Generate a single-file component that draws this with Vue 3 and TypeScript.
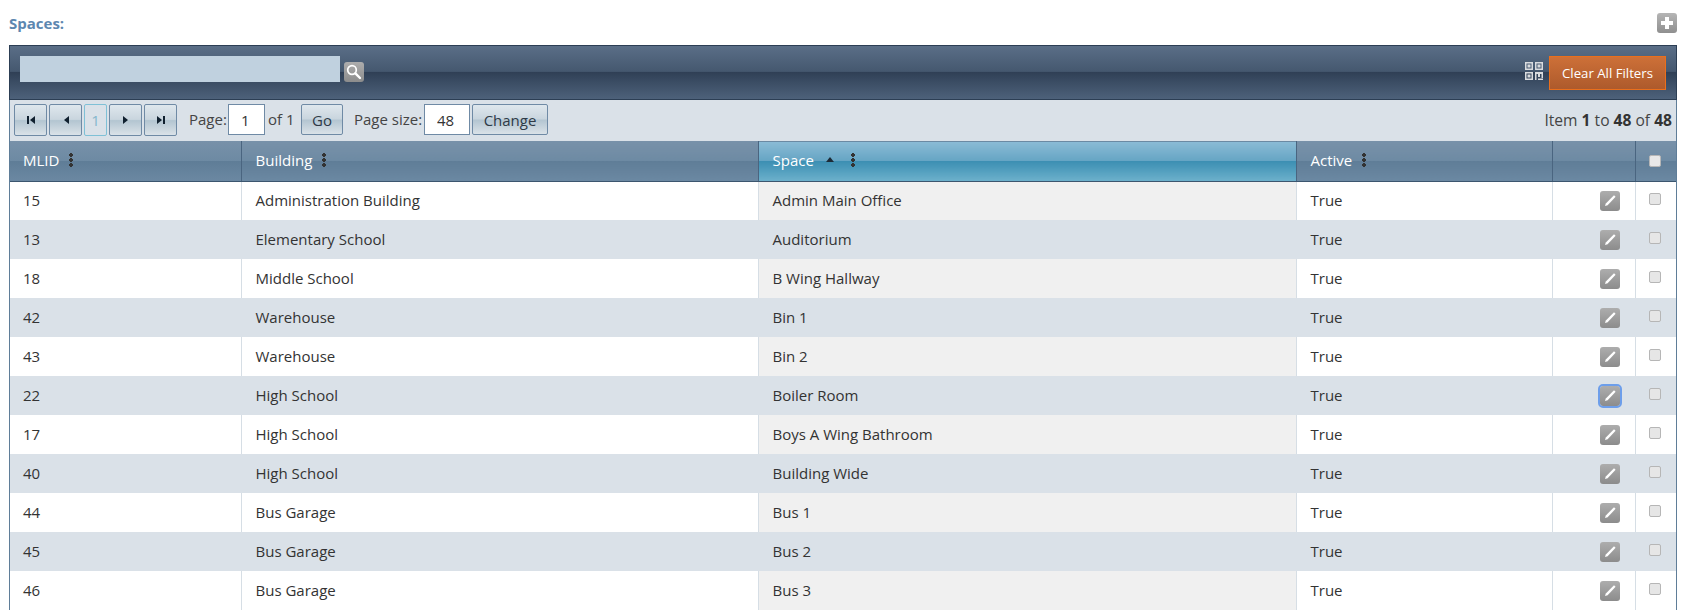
<script setup lang="ts">
interface Row { id: number; building: string; space: string; active: string; focus?: boolean }
const rows: Row[] = [
  { id: 15, building: 'Administration Building', space: 'Admin Main Office', active: 'True' },
  { id: 13, building: 'Elementary School', space: 'Auditorium', active: 'True' },
  { id: 18, building: 'Middle School', space: 'B Wing Hallway', active: 'True' },
  { id: 42, building: 'Warehouse', space: 'Bin 1', active: 'True' },
  { id: 43, building: 'Warehouse', space: 'Bin 2', active: 'True' },
  { id: 22, building: 'High School', space: 'Boiler Room', active: 'True', focus: true },
  { id: 17, building: 'High School', space: 'Boys A Wing Bathroom', active: 'True' },
  { id: 40, building: 'High School', space: 'Building Wide', active: 'True' },
  { id: 44, building: 'Bus Garage', space: 'Bus 1', active: 'True' },
  { id: 45, building: 'Bus Garage', space: 'Bus 2', active: 'True' },
  { id: 46, building: 'Bus Garage', space: 'Bus 3', active: 'True' }
]
</script>

<template>
  <div class="page">
    <div class="title-row">
      <span class="title">Spaces:</span>
      <button class="icon-btn plus" aria-label="Add">
        <svg width="14" height="14" viewBox="0 0 14 14"><path d="M5 1h4v4h4v4H9v4H5V9H1V5h4z" fill="#fff" /></svg>
      </button>
    </div>
    <div class="grid">
      <div class="toolbar">
        <input class="search" />
        <button class="icon-btn search-btn" aria-label="Search">
          <svg width="16" height="16" viewBox="0 0 16 16"><circle cx="6" cy="6" r="4.3" fill="none" stroke="#fff" stroke-width="1.7" /><path d="M9.4 9.4L14 14" stroke="#fff" stroke-width="2.4" stroke-linecap="round" /></svg>
        </button>
        <svg class="qr" width="18" height="18" viewBox="0 0 18 18">
          <path fill="#d9dcdf" fill-rule="evenodd" d="M0 0h8v8H0zM1.500 1.500v5h5v-5zM2.500 2.500h3v3h-3zM10 0h8v8h-8zM11.500 1.500v5h5v-5zM12.500 2.500h3v3h-3zM0 10h8v8H0zM1.500 11.500v5h5v-5zM2.500 12.500h3v3h-3zM10 10h8v6h-1.500v-4h-1.500V15H13v-3h-1.500V18H10zM13 16.500h5V18h-5z" />
        </svg>
        <button class="clear">Clear All Filters</button>
      </div>
      <div class="pager">
        <button class="nav">
          <svg width="10" height="10" viewBox="0 0 10 10"><path d="M1 1h2v8H1zM9 1v8L4 5z" fill="#10202f" /></svg>
        </button>
        <button class="nav">
          <svg width="10" height="10" viewBox="0 0 10 10"><path d="M8 1v8L3 5z" fill="#10202f" /></svg>
        </button>
        <span class="current">1</span>
        <button class="nav">
          <svg width="10" height="10" viewBox="0 0 10 10"><path d="M2 1v8l5-4z" fill="#10202f" /></svg>
        </button>
        <button class="nav">
          <svg width="10" height="10" viewBox="0 0 10 10"><path d="M7 1h2v8H7zM1 1v8l5-4z" fill="#10202f" /></svg>
        </button>
        <span class="lbl page-lbl">Page:</span>
        <input class="num page-num" value="1" />
        <span class="lbl of">of 1</span>
        <button class="txt go">Go</button>
        <span class="lbl size-lbl">Page size:</span>
        <input class="num size-num" value="48" />
        <button class="txt change">Change</button>
        <span class="info">Item <b>1</b> to <b>48</b> of <b>48</b></span>
      </div>
      <table>
        <colgroup>
          <col class="c1" /><col class="c2" /><col class="c3" /><col class="c4" /><col class="c5" /><col class="c6" />
        </colgroup>
        <thead>
          <tr>
            <th><span class="th-in">MLID <i class="dots"></i></span></th>
            <th><span class="th-in">Building <i class="dots"></i></span></th>
            <th class="sorted"><span class="th-in">Space <i class="arrow"></i> <i class="dots"></i></span></th>
            <th><span class="th-in">Active <i class="dots"></i></span></th>
            <th></th>
            <th class="chk-h"><span class="box head-box"></span></th>
          </tr>
        </thead>
        <tbody>
          <tr v-for="r in rows" :key="r.id">
            <td>{{ r.id }}</td>
            <td>{{ r.building }}</td>
            <td class="sort-cell">{{ r.space }}</td>
            <td>{{ r.active }}</td>
            <td class="edit-cell">
              <button class="icon-btn edit" :class="{ focus: r.focus }" aria-label="Edit">
                <svg width="14" height="14" viewBox="0 0 14 14"><path d="M11 1.200l1.600 1.600L4.600 11.200 2 12l.8-2.600z" fill="#fff" /></svg>
              </button>
            </td>
            <td class="chk"><span class="box"></span></td>
          </tr>
        </tbody>
      </table>
    </div>
  </div>
</template>

<style scoped>
.page {
  padding: 13px 13px 0 9px;
  font-family: "Open Sans", "Noto Sans", sans-serif;
  font-size: 15px;
  color: #333;
}
.title-row {
  display: flex;
  justify-content: space-between;
  align-items: center;
  height: 20px;
  margin-bottom: 12px;
}
.title {
  color: #5d87b0;
  font-weight: 700;
  font-size: 15px;
}
.icon-btn {
  border: 0;
  padding: 0;
  border-radius: 3px;
  background: linear-gradient(#adadad, #8c8c8c);
  display: flex;
  align-items: center;
  justify-content: center;
}
.plus {
  width: 20px;
  height: 20px;
  background: linear-gradient(#b5b5b5, #8f8f8f);
}
.grid {
  border-left: 1px solid #5f7d98;
  border-right: 1px solid #5f7d98;
}
.toolbar {
  display: flex;
  align-items: flex-start;
  height: 55px;
  box-sizing: border-box;
  padding: 10px 10px 0 10px;
  border: 1px solid #2c3e54;
  margin: 0 -1px;
  background: linear-gradient(#5a6e87 0%, #45586f 48%, #2f3f55 49%, #3c4e65 70%, #4d617a 100%);
}
.search {
  width: 320px;
  height: 26px;
  box-sizing: border-box;
  border: 0;
  background: #c0d1df;
}
.search-btn {
  width: 20px;
  height: 20px;
  margin: 6px 0 0 4px;
}
.qr {
  margin: 6px 6px 0 auto;
}
.clear {
  width: 117px;
  height: 34px;
  box-sizing: border-box;
  border: 1px solid #ea6f1c;
  background: linear-gradient(#cd7038, #ad5a2c);
  color: #fff;
  font: inherit;
  font-size: 13.2px;
}
.pager {
  display: flex;
  align-items: flex-start;
  height: 41px;
  box-sizing: border-box;
  padding-top: 4px;
  padding-left: 4px;
  background: #dae1e8;
}
.nav,
.txt {
  box-sizing: border-box;
  padding: 0;
  border: 1px solid #6f8aa5;
  border-radius: 2px;
  background: linear-gradient(#dfe7ed 0%, #c9d5de 48%, #b3c5d1 52%, #dae2e8 100%);
  color: #2e3a47;
  font: inherit;
}
.nav {
  width: 33px;
  height: 32px;
  margin-right: 2px;
  display: flex;
  align-items: center;
  justify-content: center;
}
.current {
  width: 23px;
  height: 32px;
  box-sizing: border-box;
  margin-right: 2px;
  border: 1px solid #7fc0d6;
  border-radius: 2px;
  color: #84b6cc;
  text-align: center;
  line-height: 30px;
}
.lbl {
  line-height: 31px;
  color: #444;
}
.page-lbl {
  margin-left: 10px;
  width: 39px;
  white-space: nowrap;
}
.num {
  height: 31px;
  box-sizing: border-box;
  border: 1px solid #6f8aa5;
  background: #fff;
  font: inherit;
  color: #333;
  padding: 0 0 0 12px;
}
.page-num {
  width: 37px;
}
.of {
  margin-left: 3px;
  width: 33px;
  white-space: nowrap;
}
.txt {
  height: 31px;
}
.go {
  width: 42px;
}
.size-lbl {
  margin-left: 11px;
  width: 70px;
  white-space: nowrap;
}
.size-num {
  width: 46px;
}
.change {
  width: 76px;
  margin-left: 2px;
}
.info {
  margin-left: auto;
  margin-right: 4px;
  line-height: 32px;
  color: #444;
  font-size: 15.6px;
}
.info b {
  color: #333;
}
table {
  width: 100%;
  table-layout: fixed;
  border-collapse: collapse;
}
.c1 { width: 231px; }
.c2 { width: 517px; }
.c3 { width: 538px; }
.c4 { width: 256px; }
.c5 { width: 83px; }
th {
  height: 40px;
  padding: 0 0 2px 14px;
  box-sizing: border-box;
  text-align: left;
  font-weight: 400;
  color: #fff;
  border-left: 1px solid #4a6580;
  border-bottom: 1px solid #3c566f;
  background: linear-gradient(#7891a9 0%, #6d8aa3 50%, #5f7d97 51%, #6b88a2 100%);
}
th:first-child {
  border-left: 0;
  padding-left: 13px;
}
th.sorted {
  background: linear-gradient(#8cbcd6 0%, #66a5c4 49%, #3b8eb2 50%, #6cb0cb 100%);
  box-shadow: inset 0 1px 0 #6b8aa3;
}
.th-in {
  display: inline-flex;
  align-items: center;
  gap: 6px;
}
.dots {
  width: 4px;
  height: 14px;
  margin-left: 4px;
  background: radial-gradient(circle at 2px 2px, #333 1.8px, transparent 2px) 0 0 / 4px 5px repeat-y;
}
.arrow {
  width: 0;
  height: 0;
  margin: 0 6px 0 6px;
  border-left: 4px solid transparent;
  border-right: 4px solid transparent;
  border-bottom: 5px solid #1d2a36;
}
.arrow + .dots {
  margin-left: 5px;
}
td {
  height: 39px;
  padding: 0 0 2px 14px;
  box-sizing: border-box;
  border-left: 1px solid #d6dee5;
}
td:first-child {
  border-left: 0;
  padding-left: 13px;
}
tbody tr:nth-child(even) td {
  background: #dae1e8;
  border-left-color: #dae1e8;
}
.sort-cell {
  background: #f0f0f0;
}
td.edit-cell {
  padding: 0 0 0 47px;
}
.edit {
  width: 20px;
  height: 20px;
  box-sizing: content-box;
}
.edit.focus {
  outline: 2px solid #6d9eea;
}
td.chk {
  padding: 0 0 3px 13px;
}
th.chk-h {
  padding: 0 0 0 13px;
}
.box {
  display: block;
  width: 12px;
  height: 12px;
  box-sizing: border-box;
  border: 1px solid #b6b6b6;
  border-radius: 2px;
  background: #e6e6e6;
}
.head-box {
  background: #e8e8e8;
}
</style>

<style>
html,
body {
  overflow: hidden;
  background: #fff;
}
</style>
